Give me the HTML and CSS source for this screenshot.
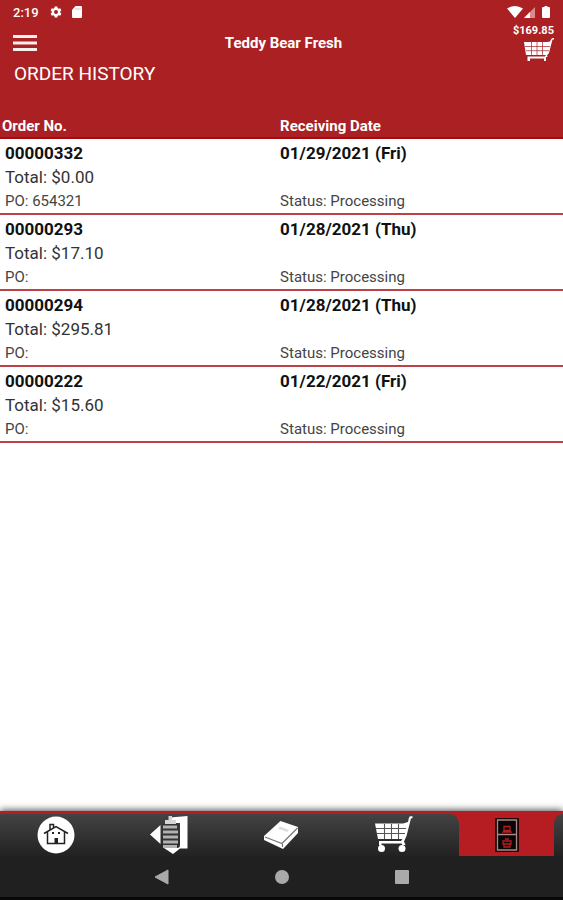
FILE: index.html
```html
<!DOCTYPE html>
<html lang="en">
<head>
<meta charset="utf-8">
<meta name="viewport" content="width=device-width, initial-scale=1">
<title>Order History</title>
<link rel="stylesheet" href="styles.css">
</head>
<body>
<header class="top">
  <div class="status">
    <span class="clock">2:19</span>
    <svg class="gear" width="12" height="12" viewBox="0 0 24 24"><path fill="#fff" fill-rule="evenodd" d="M9.500 1h5l.7 3.200 2 1.200 3.100-1 2.500 4.300-2.400 2.200v2.200l2.400 2.200-2.500 4.300-3.100-1-2 1.200-.7 3.200h-5l-.7-3.200-2-1.200-3.100 1-2.500-4.300 2.400-2.200v-2.200L1.200 8.700l2.500-4.300 3.100 1 2-1.200zM12 8a4 4 0 1 0 0 8 4 4 0 0 0 0-8z"/></svg>
    <svg width="10" height="12" viewBox="0 0 10 12"><path fill="#fff" d="M3.500 0H9q1 0 1 1v10q0 1-1 1H1q-1 0-1-1V4z"/><path d="M4 2v2M6 2v2M8 2v2" stroke="#e3a9aa" stroke-width=".8"/></svg>
    <span class="signals">
      <svg width="16" height="12" viewBox="0 0 16 12"><path fill="#fff" d="M0 2.500Q8-2.500 16 2.500L8 12z"/></svg>
      <svg width="11" height="11" viewBox="0 0 11 11"><path fill="#d98b8d" d="M11 0v11H0z"/><path fill="#fff" d="M6 5v6H0z"/></svg>
      <svg class="battery" width="8" height="12" viewBox="0 0 8 12"><path fill="#fff" d="M2.500 0h3v1H7q1 0 1 1v9q0 1-1 1H1q-1 0-1-1V2q0-1 1-1h1.500z"/></svg>
    </span>
  </div>
  <div class="bar">
    <button class="menu" aria-label="Menu"><svg width="24" height="18" viewBox="0 0 24 18"><path fill="#fff" fill-opacity=".93" d="M0 1h24v3H0zM0 7.500h24v3H0zM0 14h24v3H0z"/></svg></button>
    <span class="store">Teddy Bear Fresh</span>
    <a class="total" href="#cart"><span>$169.85</span>
      <svg width="30" height="23" viewBox="0 0 30 23"><path fill="#fff" d="M0 4H23L26 3.500L27 1.500Q27.500 0 29 0H30V1.500H28.500L25 15L23 17.500L23.500 19H22V23H20V20.500H6V23H3.500V18.500H21L22 17H2Z"/><path d="M1 8.500H26M2 12.700H25M7.500 4V17M13 4V17M18.500 4V17" stroke="#ab2023" stroke-width=".7"/></svg></a>
  </div>
  <h1>ORDER HISTORY</h1>
</header>
<main>
  <table>
    <thead><tr><th scope="col">Order No.</th><th scope="col">Receiving Date</th></tr></thead>
    <tbody>
      <tr><td><b>00000332</b><p>Total: $0.00</p><small>PO: 654321</small></td><td><b>01/29/2021 (Fri)</b><small>Status: Processing</small></td></tr>
      <tr><td><b>00000293</b><p>Total: $17.10</p><small>PO:</small></td><td><b>01/28/2021 (Thu)</b><small>Status: Processing</small></td></tr>
      <tr><td><b>00000294</b><p>Total: $295.81</p><small>PO:</small></td><td><b>01/28/2021 (Thu)</b><small>Status: Processing</small></td></tr>
      <tr><td><b>00000222</b><p>Total: $15.60</p><small>PO:</small></td><td><b>01/22/2021 (Fri)</b><small>Status: Processing</small></td></tr>
    </tbody>
  </table>
</main>
<footer>
  <nav class="tabs">
    <a href="#home" aria-label="Home"><svg width="38" height="38" viewBox="0 0 38 38"><circle cx="19" cy="19" r="18.500" fill="#fff"/><g fill="none" stroke="#222" stroke-width="1.500"><path d="M7 17.500L19 10.500L31 17.500M10.500 16V27.500H27.500V16M13 13.500V8.500H16.500V11.500"/></g><path d="M17.500 22h3.500v6h-3.500zM15 16h2v2h-2zM21 16H23v2h-2z" fill="#222"/></svg></a>
    <a href="#orders" aria-label="Order guide"><svg width="38" height="38" viewBox="0 0 38 38"><path d="M0 18.500L10.500 9V28zM20 1.500L37.500 0V32.500H30L23 38L14 32H27Q30 32 30 29V7H20z" fill="#fff"/><path d="M13 8H28V29Q28 31.500 25.500 31.500H13z" fill="#333"/><path d="M13 11H27M13 16H28M13 21H28M13 26H28M13 30.500H27" stroke="#b2b2b2" stroke-width="3"/><path d="M15 8V4H18.500V0H22V4H26V8z" fill="#d5d5d5"/></svg></a>
    <a href="#catalog" aria-label="Catalog"><svg width="38" height="38" viewBox="0 0 38 38"><path d="M18.500 5L36 11V17L21 33L2 24V20z" fill="#fff"/><path d="M3 21L20 27.500L35.500 12M20.500 28V31" fill="none" stroke="#777" stroke-width="1.200"/><path d="M18 10.500L27 14L25 16L16 12.500z" fill="#ddd"/></svg></a>
    <a href="#cart" aria-label="Cart"><svg width="38" height="38" viewBox="0 0 38 38"><path d="M0 7.500H28L33 6L34 1.500Q34.500 .3 36 .3H37.500V2.300H36L31.500 20L29 25.500L30.500 29H27.500L26.500 27.500H6.500V29.500H4V25H26L27.500 23H3Z" fill="#fff"/><path d="M1 12.500H31M2 17.500H30M9.500 8V23M16.500 8V23M23.500 8V23" stroke="#555" stroke-width="1.100" fill="none"/><circle cx="6.500" cy="32.500" r="3.500" fill="#fff"/><circle cx="27" cy="32.500" r="3.500" fill="#fff"/></svg></a>
    <a class="active" href="#history" aria-label="Order history" aria-current="page"><svg width="24" height="34" viewBox="0 0 24 34"><rect width="24" height="34" rx="1" fill="#210607"/><path d="M2.500 2H21.500V32H2.500zM2.500 16.500H21.500" fill="#080606" stroke="#a88" stroke-width="1.300"/><g fill="none" stroke="#b51d22" stroke-width="1.300"><path d="M9 8.500h6v4H9zM8 14l1-1.500h6l1 1.500z"/><path d="M8 23h8v3H8zM9 26v3h6v-3M10 21h4"/></g></svg></a>
  </nav>
  <div class="system">
    <button aria-label="Back"><svg width="16" height="16" viewBox="0 0 16 16"><path d="M1 8L14 1V15z" fill="#aaa" stroke="#aaa" stroke-linejoin="round"/></svg></button>
    <button aria-label="Home"><svg width="16" height="16" viewBox="0 0 16 16"><circle cx="8" cy="8" r="7" fill="#aaa"/></svg></button>
    <button aria-label="Recent apps"><svg width="16" height="16" viewBox="0 0 16 16"><rect x="1" y="1" width="14" height="14" rx="1" fill="#aaa"/></svg></button>
  </div>
</footer>
</body>
</html>
```
FILE: styles.css
```css
* { box-sizing: border-box; }
body {
  margin: 0;
  min-height: 100vh;
  display: flex;
  flex-direction: column;
  font-family: Roboto, "Liberation Sans", sans-serif;
  background: #fff;
  color: #111;
}
svg { display: block; }
button { border: 0; padding: 0; background: none; }
a { color: inherit; text-decoration: none; }
.top, thead { background: #ab2023; color: #fff; }
.status {
  display: flex;
  align-items: center;
  height: 24px;
  padding: 0 13px;
}
.clock { font-size: 13px; font-weight: 500; }
.gear { margin: 0 10px 0 11px; }
.signals { display: flex; align-items: center; margin-left: auto; gap: 1px; }
.battery { margin-left: 6px; }
.bar {
  display: grid;
  grid-template-columns: 1fr auto 1fr;
  align-items: center;
  height: 36px;
  padding: 0 9px 0 13px;
}
.menu { justify-self: start; }
.store { font-size: 15px; font-weight: 700; }
.total {
  justify-self: end;
  display: flex;
  flex-direction: column;
  align-items: flex-end;
  font-size: 11px;
  line-height: 14px;
  font-weight: 700;
}
h1 {
  margin: 0;
  padding: 2px 14px 0;
  height: 54px;
  font-size: 19px;
  line-height: 24px;
  font-weight: 400;
}
table { width: 100%; border-collapse: separate; border-spacing: 0; table-layout: fixed; }
th {
  padding: 0 2px;
  height: 25px;
  border-bottom: 2px solid #a8090f;
  font-size: 15px;
  line-height: 22px;
  font-weight: 700;
  text-align: left;
}
th:first-child { width: 49.75%; }
td {
  height: 76px;
  padding: 2px 5px 0;
  border-bottom: 2px solid #bd4247;
  vertical-align: top;
  line-height: 24px;
}
th + th, td + td { padding-left: 0; }
td b, td p, td small { display: block; margin: 0; }
td b { font-size: 17px; font-weight: 700; }
td p { font-size: 17px; font-weight: 400; color: #333; }
td small { font-size: 15px; font-weight: 400; color: #444; }
td b + small { margin-top: 24px; }
main { flex: 1; }
footer {
  background: #202020;
  border-bottom: 3px solid #080808;
  box-shadow: 0 -1px 7px rgba(0, 0, 0, .7);
}
.tabs {
  display: grid;
  grid-template-columns: repeat(5, 1fr);
  height: 45px;
  border-top: 3px solid #b51d22;
  background: linear-gradient(#434343, #222);
}
.tabs a { display: flex; justify-content: center; align-items: center; }
.tabs .active { position: relative; margin: 0 9px; background: #b51d22; }
.active::before, .active::after {
  content: "";
  position: absolute;
  top: 0;
  width: 8px;
  height: 8px;
}
.active::before { right: 100%; background: radial-gradient(circle at 0 100%, transparent 7px, #b51d22 8px); }
.active::after { left: 100%; background: radial-gradient(circle at 100% 100%, transparent 7px, #b51d22 8px); }
.system { display: flex; justify-content: center; height: 41px; }
.system button { width: 120px; display: flex; justify-content: center; align-items: center; }
```
